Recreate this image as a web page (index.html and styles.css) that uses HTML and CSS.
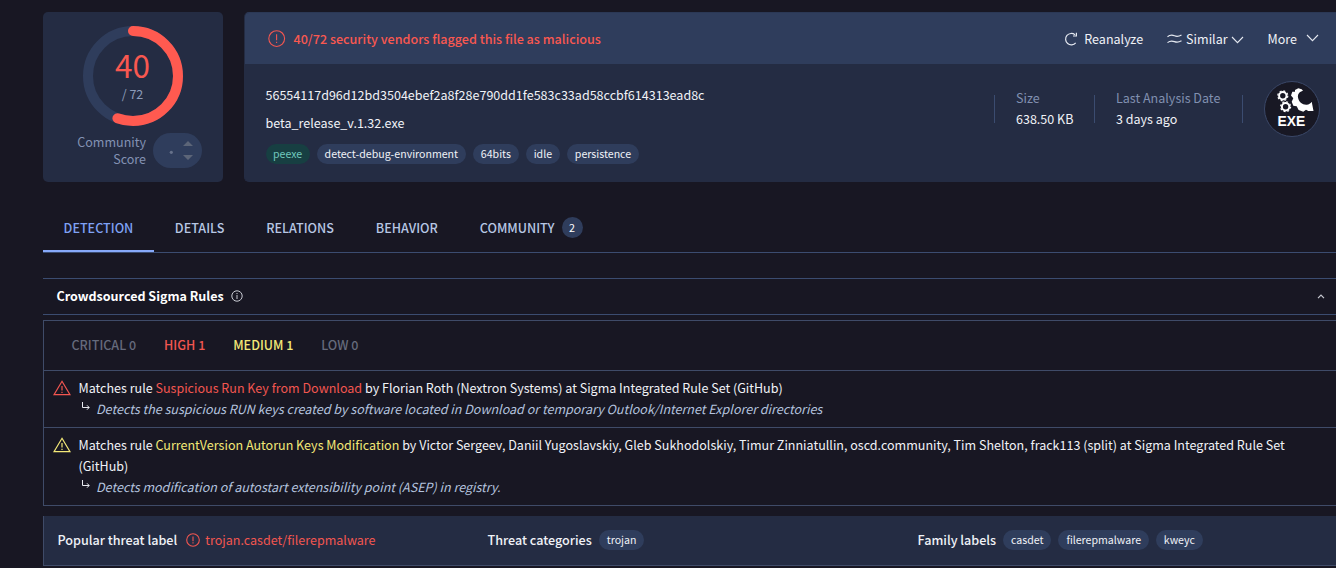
FILE: index.html
```
<!DOCTYPE html>
<html lang="en">
<head>
<meta charset="utf-8">
<title>File report</title>
<link rel="stylesheet" href="styles.css">
</head>
<body>
<main class="page">
  <section class="summary">
    <div class="score-card">
      <div class="ring">
        <svg class="ring-art" width="100" height="100" viewBox="0 0 100 100">
          <circle cx="50" cy="50" r="45" fill="none" stroke="#2f3d5c" stroke-width="10"/>
          <circle cx="50" cy="50" r="45" fill="none" stroke="#ff5a50" stroke-width="10" stroke-linecap="round" stroke-dasharray="157.08 283" transform="rotate(-90 50 50)"/>
        </svg>
        <div class="ring-text">
          <span class="ring-value">40</span>
          <span class="ring-total">/ 72</span>
        </div>
      </div>
      <div class="community">
        <span class="community-label">Community<br>Score</span>
        <svg width="49" height="35" viewBox="0 0 49 35">
          <rect width="49" height="35" rx="17.5" fill="#2f3d5c"/>
          <circle cx="18.3" cy="19.3" r="1.6" fill="#66718a"/>
          <path d="M30 13L35 8L40 13Z M30 22L35 27L40 22Z" fill="#5c6578"/>
        </svg>
      </div>
    </div>
    <div class="file-card">
      <header class="file-head">
        <svg width="18" height="18" viewBox="0 0 18 18" fill="none" stroke="#f25650" stroke-width="1.1"><circle cx="8.700" cy="8.600" r="7.900"/><path d="M8.600 4.300V10.300M8.600 11.700V13"/></svg>
        <span class="verdict">40/72 security vendors flagged this file as malicious</span>
        <nav class="actions">
          <a class="action reanalyze"><svg width="14" height="14" viewBox="0 0 14 14" fill="none" stroke="#e4e8f0" stroke-width="1.2"><path d="M11.7 10.8A5.7 5.7 0 1 1 11 2.8M12.4 .8V4H9"/></svg>Reanalyze</a>
          <a class="action similar"><svg width="15" height="10" viewBox="0 0 15 10" fill="none" stroke="#e4e8f0" stroke-width="1.2"><path d="M.5 2.800C3 .8 5.500 1 7.500 1.800S12 2.400 14.500 1M.5 8.600C3 6.600 5.500 6.800 7.500 7.600S12 8.200 14.500 6.800"/></svg>Similar<svg class="chev" width="13" height="8" viewBox="0 0 13 8" fill="none" stroke="#e4e8f0" stroke-width="1.1"><path d="M1 1L6.500 6.700L12 1"/></svg></a>
          <a class="action more">More<svg class="chev chev-up" width="13" height="8" viewBox="0 0 13 8" fill="none" stroke="#e4e8f0" stroke-width="1.1"><path d="M1 1L6.500 6.700L12 1"/></svg></a>
        </nav>
      </header>
      <div class="file-body">
        <div class="identity">
          <div class="hash">56554117d96d12bd3504ebef2a8f28e790dd1fe583c33ad58ccbf614313ead8c</div>
          <div class="filename">beta_release_v.1.32.exe</div>
          <div class="chips"><span class="chip chip-green">peexe</span><span class="chip">detect-debug-environment</span><span class="chip">64bits</span><span class="chip">idle</span><span class="chip">persistence</span></div>
        </div>
        <div class="facts">
          <div class="fact size"><span class="fact-name">Size</span><span>638.50 KB</span></div>
          <div class="fact date"><span class="fact-name">Last Analysis Date</span><span>3 days ago</span></div>
          <div class="fact last"></div>
          <svg class="exe" width="56" height="56" viewBox="0 0 56 56">
            <circle cx="28" cy="28" r="27.500" fill="#181824" stroke="#3b4868"/>
            <g fill="none" stroke="#fff">
              <circle cx="18.800" cy="14.800" r="3.700" stroke-width="2"/>
              <circle cx="18.800" cy="14.800" r="5" stroke-width="1.200" stroke-dasharray="1.960 1.967"/>
              <circle cx="21.600" cy="25.700" r="3.700" stroke-width="2"/>
              <circle cx="21.600" cy="25.700" r="5" stroke-width="1.200" stroke-dasharray="1.960 1.967"/>
            </g>
            <path d="M31 9L34.300 7.300L37.700 8.300L39 9.700C35.500 10.500 33.600 13 34 16.500C34.800 21 38.500 24 42.700 23.700C45 23.500 46.500 22.500 47.700 20.700L49.500 30L44.300 30L42 28.800L39.300 30.700L34.600 29L32.700 25.300L29.300 24.700L27.700 20.700L29.300 17.300L27 14.500L28.300 10.700L31 10.700Z" fill="#fff"/>
            <text class="exe-text" x="27.300" y="44.500" text-anchor="middle">EXE</text>
          </svg>
        </div>
      </div>
    </div>
  </section>

  <nav class="tabs">
    <a class="tab active">DETECTION</a><a class="tab">DETAILS</a><a class="tab">RELATIONS</a><a class="tab">BEHAVIOR</a><a class="tab">COMMUNITY<span class="count">2</span></a>
  </nav>

  <header class="rules-head">
    <span class="rules-title">Crowdsourced Sigma Rules</span>
    <svg width="12" height="12" viewBox="0 0 12 12" fill="none" stroke="#c8cad2"><circle cx="6" cy="6" r="5.200"/><path d="M6 5V9M6 3V4.100"/></svg>
    <svg class="collapse" width="8" height="5" viewBox="0 0 8 5" fill="none" stroke="#c8cad2" stroke-width="1.200"><path d="M1 4.200L4 1.200L7 4.200"/></svg>
  </header>

  <section class="rules">
    <div class="levels"><span class="level">CRITICAL 0</span><span class="level high">HIGH 1</span><span class="level medium">MEDIUM 1</span><span class="level">LOW 0</span></div>
    <article class="rule high">
      <svg class="warn" width="18" height="16" viewBox="0 0 18 16" fill="none" stroke="currentColor" stroke-width="1.200"><path d="M9 1.300L17 14.700H1ZM9 6V10.500M9 11.700V13"/></svg>
      <div class="rule-text">
        <p>Matches rule <a class="rule-name">Suspicious Run Key from Download</a> by Florian Roth (Nextron Systems) at Sigma Integrated Rule Set (GitHub)</p>
        <p class="detail"><svg width="9" height="9" viewBox="0 0 9 9" fill="none" stroke="#e8eaf0"><path d="M1.500 0V5.500H8M6 3.300L8.200 5.500L6 7.700"/></svg><em>Detects the suspicious RUN keys created by software located in Download or temporary Outlook/Internet Explorer directories</em></p>
      </div>
    </article>
    <article class="rule medium">
      <svg class="warn" width="18" height="16" viewBox="0 0 18 16" fill="none" stroke="currentColor" stroke-width="1.200"><path d="M9 1.300L17 14.700H1ZM9 6V10.500M9 11.700V13"/></svg>
      <div class="rule-text">
        <p>Matches rule <a class="rule-name">CurrentVersion Autorun Keys Modification</a> by Victor Sergeev, Daniil Yugoslavskiy, Gleb Sukhodolskiy, Timur Zinniatullin, oscd.community, Tim Shelton, frack113 (split) at Sigma Integrated Rule Set<br>(GitHub)</p>
        <p class="detail"><svg width="9" height="9" viewBox="0 0 9 9" fill="none" stroke="#e8eaf0"><path d="M1.500 0V5.500H8M6 3.300L8.200 5.500L6 7.700"/></svg><em>Detects modification of autostart extensibility point (ASEP) in registry.</em></p>
      </div>
    </article>
  </section>

  <section class="threat">
    <div class="threat-group"><b>Popular threat label</b><svg class="alert" width="14" height="14" viewBox="0 0 14 14" fill="none" stroke="#f25650" stroke-width="1.100"><circle cx="7" cy="7" r="6.300"/><path d="M7 3.500V8.200M7 9.300V10.500"/></svg><span class="threat-name">trojan.casdet/filerepmalware</span></div>
    <div class="threat-group"><b>Threat categories</b><span class="chip">trojan</span></div>
    <div class="threat-group"><b>Family labels</b><span class="chip">casdet</span><span class="chip">filerepmalware</span><span class="chip">kweyc</span></div>
  </section>
</main>
</body>
</html>
```
FILE: styles.css
```
* { box-sizing: border-box; }
body {
  margin: 0;
  overflow: hidden;
  background: #181723;
  color: #f0f2f7;
  font-family: "Noto Sans CJK SC", "Noto Sans", sans-serif;
  font-size: 12.54px;
  line-height: 21px;
}
svg { display: block; flex: none; }
p { margin: 0; }
.page { padding: 12px 0 0 43px; white-space: nowrap; }

.summary { display: flex; gap: 21px; height: 170px; }
.score-card { width: 180px; background: #242c43; border-radius: 5px; padding-top: 14px; }
.ring { display: grid; width: 100px; margin: 0 auto; }
.ring-art, .ring-text { grid-area: 1 / 1; }
.ring-text { display: flex; flex-direction: column; align-items: center; padding-top: 20px; }
.ring-value { margin-left: -1px; color: #f95850; font-size: 31.500px; line-height: 37px; }
.ring-total { margin-left: -1px; color: #8d9cba; line-height: 21px; }
.community { display: flex; gap: 7px; padding: 7px 0 0 34px; align-items: center; }
.community svg { margin-top: -1px; }
.community-label { width: 69px; padding-bottom: 2px; text-align: right; color: #8392b3; line-height: 17px; }

.file-card { flex: 1; background: #242c43; border: 1px solid #303c59; border-color: #2b3855 #242c43 #242c43; border-right: 0; border-radius: 5px 0 0 5px; overflow: hidden; }
.file-head { display: flex; align-items: center; height: 51px; padding: 0 17px 0 23px; background: #2f3d5c; }
.verdict { margin-left: 7.5px; color: #f95850; font-size: 12.58px; font-weight: 500; }
.actions { display: flex; margin-left: auto; }
.action { display: flex; align-items: center; }
.reanalyze { gap: 6.5px; margin-right: 23.5px; }
.similar { gap: 4.5px; margin-right: 23.5px; }
.more { gap: 9px; }
.chev { margin-top: 2px; }
.chev-up { margin-top: -1px; }
.similar .chev { margin-left: -1px; }
.file-body { display: flex; padding: 17px 16px 0 20.5px; }
.hash, .filename { height: 28px; line-height: 28px; }
.chips { display: flex; gap: 7px; padding-top: 7px; }
.chip { height: 20px; padding: 0 7.9px; border-radius: 10px; background: #2f3d5c; font-size: 10.6px; line-height: 20px; }
.chip-green { padding: 0 7.500px; background: #173f42; color: #70c8bd; }
.facts { display: flex; margin-left: auto; }
.fact { display: flex; flex-direction: column; justify-content: center; height: 28px; margin-top: 14px; padding: 0 0 2px 21px; border-left: 1px solid #3b4c70; }
.size { width: 100px; }
.date { width: 148px; }
.last { width: 22px; }
.fact-name { color: #8190b0; }
.exe-text { font: bold 13.8px "Liberation Sans", sans-serif; fill: #fff; }

.tabs { display: flex; height: 49px; margin-top: 22px; border-bottom: 1px solid #3b4c70; color: #b7c7e4; font-size: 12.58px; font-weight: 500; }
.tab { display: flex; align-items: center; height: 48px; padding: 0 21px 0 20.900px; border-bottom: 2px solid transparent; }
.active { padding: 0 20.6px; color: #7fa2f5; border-bottom-color: #87a9fa; }
.count { width: 21px; height: 21px; margin-left: 7px; border-radius: 50%; background: #2f3d5c; color: #fff; font-size: 10.8px; font-weight: 400; text-align: center; }

.rules-head { display: flex; align-items: center; gap: 7.500px; height: 37px; margin-top: 25px; padding: 0 11px 1px 13.500px; border: solid #3b4c70; border-width: 1px 0; }
.rules-title { margin-bottom: 1.500px; color: #fff; font-weight: 700; }
.collapse { margin-left: auto; }
.rules { margin-top: 5px; border: 1px solid #3f4b68; border-right: 0; }
.levels { display: flex; gap: 27.900px; height: 49px; padding-left: 27.500px; line-height: 48px; font-size: 12.56px; font-weight: 500; color: #656a7c; }
.high { color: #f25650; }
.medium { color: #f3e877; }
.rule { display: flex; gap: 8px; padding: 6px 0 8px 8.500px; border-top: 1px solid #3f4b68; }
.warn { margin-top: 3px; }
.rule-text { color: #f0f2f7; }
.high .rule-name { color: #f25650; }
.medium .rule-name { color: #f3e877; }
.detail { display: flex; gap: 6px; padding-left: 2.500px; color: #b4c3df; }
.detail svg { margin-top: 4px; }

.threat { display: grid; grid-template-columns: 430px 430px 1fr; height: 50px; margin-top: 10px; padding: 0 0 1px 13.500px; background: #242c43; border-left: 1px solid #3f4b68; border-bottom: 1px solid #3f4b68; }
.threat-group { display: flex; align-items: center; gap: 7px; }
.threat-group b { margin-bottom: 1.500px; font-size: 12.600px; font-weight: 500; }
.alert { margin-left: 1.500px; }
.threat-name { margin: 0 0 1.500px -1.500px; color: #f25650; }
```
